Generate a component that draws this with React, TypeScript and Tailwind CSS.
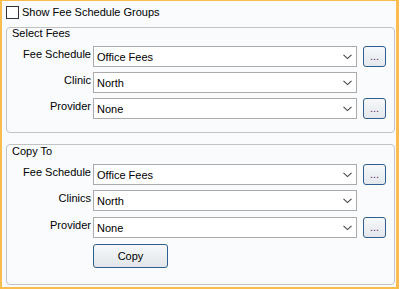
import React from "react";

function Chevron() {
  return (
    <svg width="9" height="6" viewBox="0 0 9 6" className="shrink-0">
      <polyline points="0.5,0.8 4.5,4.6 8.5,0.8" fill="none" stroke="#444" strokeWidth="1.1" />
    </svg>
  );
}

function Combo({ value }: { value: string }) {
  return (
    <div className="ml-[2px] flex h-[21px] w-[264px] items-start justify-between border border-[#ababab] bg-white pl-[3px] pr-[4px]">
      <span className="pt-[2px] leading-[17px] text-black">{value}</span>
      <div className="flex h-[19px] items-center pt-[1px]">
        <Chevron />
      </div>
    </div>
  );
}

function DotsButton() {
  return (
    <div className="ml-[6px] flex h-[21px] w-[23px] items-center justify-center rounded-[3px] border border-[#2f5f8f] bg-gradient-to-b from-[#f6f8fa] to-[#e4e8ec] leading-[19px] text-[#5a2466]">
      ...
    </div>
  );
}

function Row({
  label,
  value,
  button,
  className,
}: {
  label: string;
  value: string;
  button?: boolean;
  className?: string;
}) {
  return (
    <div className={"flex h-[21px] items-start " + (className ?? "")}>
      <div className="w-[84px] text-right leading-[17px] text-black">{label}</div>
      <Combo value={value} />
      {button && <DotsButton />}
    </div>
  );
}

export default function App() {
  return (
    <div className="flex h-[289px] w-[399px] flex-col border-b-2 border-l-2 border-r-[3px] border-t border-[#fbbc4e] bg-[#f9fbfd] font-['Liberation_Sans',Arial,sans-serif] text-[11px] text-black">
      <div className="ml-[4px] mt-[5px] flex items-start">
        <div className="h-[13px] w-[13px] border border-[#333333] bg-white" />
        <span className="ml-[3px] leading-[13px]">Show Fee Schedule Groups</span>
      </div>

      <div className="ml-[4px] mt-[8px] flex h-[106px] w-[389px] flex-col rounded-[4px] border border-[#c2c2c2]">
        <div className="h-[11px] pl-[5px] leading-[11px]">Select Fees</div>
        <Row className="mt-[7px]" label="Fee Schedule" value="Office Fees" button />
        <Row className="mt-[5px]" label="Clinic" value="North" />
        <Row className="mt-[5px]" label="Provider" value="None" button />
      </div>

      <div className="ml-[4px] mt-[11px] flex h-[141px] w-[389px] flex-col rounded-[4px] border border-[#c2c2c2]">
        <div className="mt-[1px] h-[11px] pl-[5px] leading-[11px]">Copy To</div>
        <Row className="mt-[7px]" label="Fee Schedule" value="Office Fees" button />
        <Row className="mt-[5px]" label="Clinics" value="North" />
        <Row className="mt-[6px]" label="Provider" value="None" button />
        <div className="ml-[86px] mt-[6px] flex h-[24px] w-[75px] items-center justify-center rounded-[3px] border border-[#2f5f8f] bg-gradient-to-b from-[#f6f8fa] to-[#e2e6ea] leading-[22px] text-black">
          Copy
        </div>
      </div>
    </div>
  );
}
